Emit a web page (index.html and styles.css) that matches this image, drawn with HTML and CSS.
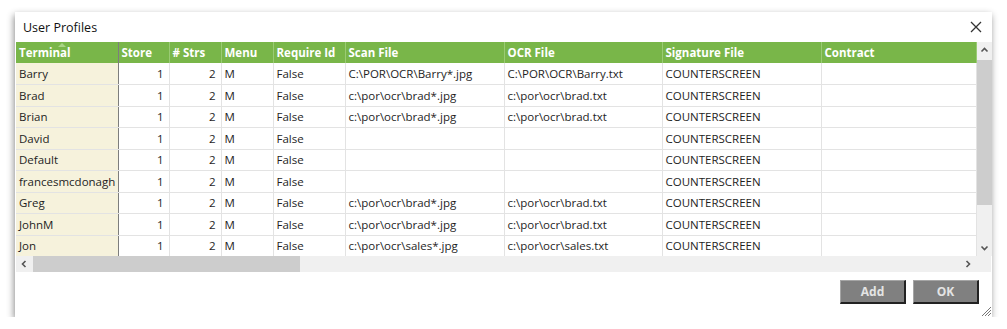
FILE: index.html
```html
<!DOCTYPE html>
<html lang="en">
<head>
  <meta charset="UTF-8" />
  <title>User Profiles</title>
  <link rel="stylesheet" href="styles.css">
</head>
<body>
  <div class="window">
    <div class="titlebar">
      <span class="title">User Profiles</span>
      <svg class="close" width="12" height="12" viewBox="0 0 12 12">
        <path d="M1 1 L11 11 M11 1 L1 11" stroke="#333" stroke-width="1.3" fill="none" />
      </svg>
    </div>

    <div class="grid-area">
      <table class="grid">
        <colgroup>
          <col style="width:102px"><col style="width:51px"><col style="width:52px"><col style="width:52px">
          <col style="width:72px"><col style="width:159px"><col style="width:158px"><col style="width:159px"><col style="width:155px">
        </colgroup>
        <thead>
          <tr>
            <th class="key"><span class="sort"></span>Terminal</th>
            <th>Store</th>
            <th># Strs</th>
            <th>Menu</th>
            <th>Require Id</th>
            <th>Scan File</th>
            <th>OCR File</th>
            <th>Signature File</th>
            <th>Contract</th>
          </tr>
        </thead>
        <tbody>
          <tr><td class="key">Barry</td><td class="num">1</td><td class="num">2</td><td>M</td><td>False</td><td>C:\POR\OCR\Barry*.jpg</td><td>C:\POR\OCR\Barry.txt</td><td>COUNTERSCREEN</td><td></td></tr>
          <tr><td class="key">Brad</td><td class="num">1</td><td class="num">2</td><td>M</td><td>False</td><td>c:\por\ocr\brad*.jpg</td><td>c:\por\ocr\brad.txt</td><td>COUNTERSCREEN</td><td></td></tr>
          <tr><td class="key">Brian</td><td class="num">1</td><td class="num">2</td><td>M</td><td>False</td><td>c:\por\ocr\brad*.jpg</td><td>c:\por\ocr\brad.txt</td><td>COUNTERSCREEN</td><td></td></tr>
          <tr><td class="key">David</td><td class="num">1</td><td class="num">2</td><td>M</td><td>False</td><td></td><td></td><td>COUNTERSCREEN</td><td></td></tr>
          <tr><td class="key">Default</td><td class="num">1</td><td class="num">2</td><td>M</td><td>False</td><td></td><td></td><td>COUNTERSCREEN</td><td></td></tr>
          <tr><td class="key">francesmcdonagh</td><td class="num">1</td><td class="num">2</td><td>M</td><td>False</td><td></td><td></td><td>COUNTERSCREEN</td><td></td></tr>
          <tr><td class="key">Greg</td><td class="num">1</td><td class="num">2</td><td>M</td><td>False</td><td>c:\por\ocr\brad*.jpg</td><td>c:\por\ocr\brad.txt</td><td>COUNTERSCREEN</td><td></td></tr>
          <tr><td class="key">JohnM</td><td class="num">1</td><td class="num">2</td><td>M</td><td>False</td><td>c:\por\ocr\brad*.jpg</td><td>c:\por\ocr\brad.txt</td><td>COUNTERSCREEN</td><td></td></tr>
          <tr><td class="key">Jon</td><td class="num">1</td><td class="num">2</td><td>M</td><td>False</td><td>c:\por\ocr\sales*.jpg</td><td>c:\por\ocr\sales.txt</td><td>COUNTERSCREEN</td><td></td></tr>
        </tbody>
      </table>

      <div class="vscroll">
        <svg class="arrow" width="15" height="16" viewBox="0 0 15 16">
          <path d="M4.5 9.5 L7.5 6.5 L10.5 9.5" stroke="#555" stroke-width="1.6" fill="none" />
        </svg>
        <div class="vthumb"></div>
        <svg class="arrow down" width="15" height="16" viewBox="0 0 15 16">
          <path d="M4.5 6.5 L7.5 9.5 L10.5 6.5" stroke="#555" stroke-width="1.6" fill="none" />
        </svg>
      </div>
    </div>

    <div class="hscroll-row">
      <div class="hscroll">
        <svg class="harrow" width="17" height="16" viewBox="0 0 17 16">
          <path d="M9.5 5 L6.5 8 L9.5 11" stroke="#555" stroke-width="1.6" fill="none" />
        </svg>
        <div class="hthumb"></div>
        <svg class="harrow right" width="17" height="16" viewBox="0 0 17 16">
          <path d="M7.5 5 L10.5 8 L7.5 11" stroke="#555" stroke-width="1.6" fill="none" />
        </svg>
      </div>
      <div class="corner"></div>
    </div>

    <div class="footer">
      <button type="button" class="btn">Add</button>
      <button type="button" class="btn">OK</button>
    </div>

    <!-- size grip -->
    <svg class="grip" width="10" height="10" viewBox="0 0 10 10">
      <path d="M10 1 L1 10 M10 4 L4 10 M10 7 L7 10" stroke="#777" stroke-width="1" fill="none" />
    </svg>
  </div>
</body>
</html>
```

FILE: styles.css
```css
* {
  margin: 0;
  padding: 0;
  box-sizing: border-box;
}
body {
  font-family: 'Open Sans', 'Noto Sans', sans-serif;
  background: #fff;
  color: #1e1e1e;
  font-size: 11.5px;
}
.window {
  position: relative;
  margin: 12px 0 0 15px;
  width: 977px;
  height: 305px;
  background: #fff;
  box-shadow: -1px 3px 7px rgba(0, 0, 0, 0.45);
  display: flex;
  flex-direction: column;
}
.titlebar {
  height: 30px;
  display: flex;
  align-items: center;
  justify-content: space-between;
  padding: 0 10px 0 8px;
}
.title {
  font-size: 12.5px;
  color: #111;
}
.grid-area {
  display: flex;
  margin-left: 1px;
  height: 214px;
  overflow: hidden;
}
.grid {
  width: 960px;
  table-layout: fixed;
  border-collapse: collapse;
}
.grid th {
  height: 21px;
  background: #79b649;
  color: #fff;
  font-weight: bold;
  text-align: left;
  padding: 0 3px;
  border-right: 1px solid #9acb74;
  white-space: nowrap;
  position: relative;
}
.grid td {
  height: 21.5px;
  padding: 0 3px;
  border-right: 1px solid #e3e3e3;
  border-bottom: 1px solid #e3e3e3;
  white-space: nowrap;
  overflow: hidden;
}
.grid td.num {
  text-align: right;
  padding-right: 5px;
}
.grid .key {
  border-right: 1px solid #7d7d7d;
}
.grid td.key {
  background: #f6f2dc;
}
.sort {
  position: absolute;
  top: 1px;
  left: 42px;
  border-left: 4px solid transparent;
  border-right: 4px solid transparent;
  border-bottom: 4px solid #a9d486;
}
.vscroll {
  width: 15px;
  background: #f0f0f0;
  display: flex;
  flex-direction: column;
}
.arrow {
  display: block;
}
.arrow.down {
  margin-top: auto;
}
.vthumb {
  width: 15px;
  height: 145px;
  margin-top: 2px;
  background: #cdcdcd;
}
.hscroll-row {
  display: flex;
  margin-left: 1px;
  height: 16px;
}
.hscroll {
  width: 960px;
  background: #f0f0f0;
  display: flex;
}
.harrow {
  display: block;
}
.harrow.right {
  margin-left: auto;
}
.hthumb {
  width: 267px;
  height: 16px;
  background: #cdcdcd;
}
.corner {
  width: 15px;
  background: #f0f0f0;
}
.footer {
  flex: 1;
  display: flex;
  justify-content: flex-end;
  align-items: flex-start;
  gap: 7px;
  padding: 8px 13px 0 0;
}
.btn {
  width: 66px;
  height: 24px;
  background: #808080;
  color: #e4e4e4;
  font-family: 'Open Sans', 'Noto Sans', sans-serif;
  font-size: 12px;
  font-weight: bold;
  border: 1px solid #a5a5a5;
  border-right: 2px solid #222;
  border-bottom: 2px solid #222;
}
.grip {
  position: absolute;
  right: 1px;
  bottom: 1px;
}
```
